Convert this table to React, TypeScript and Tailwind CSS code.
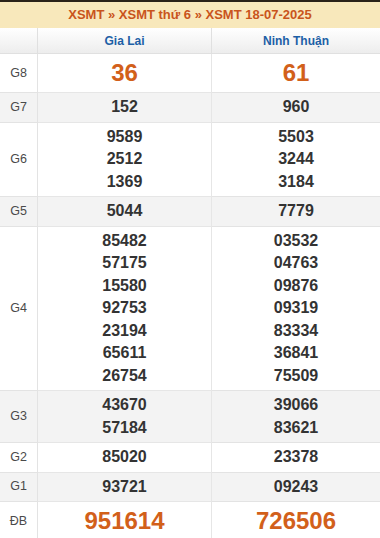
import React from "react";

type Row = { label: string; a: string[]; b: string[]; big?: boolean };

const rows: Row[] = [
  { label: "G8", a: ["36"], b: ["61"], big: true },
  { label: "G7", a: ["152"], b: ["960"] },
  { label: "G6", a: ["9589", "2512", "1369"], b: ["5503", "3244", "3184"] },
  { label: "G5", a: ["5044"], b: ["7779"] },
  {
    label: "G4",
    a: ["85482", "57175", "15580", "92753", "23194", "65611", "26754"],
    b: ["03532", "04763", "09876", "09319", "83334", "36841", "75509"],
  },
  { label: "G3", a: ["43670", "57184"], b: ["39066", "83621"] },
  { label: "G2", a: ["85020"], b: ["23378"] },
  { label: "G1", a: ["93721"], b: ["09243"] },
  { label: "ĐB", a: ["951614"], b: ["726506"], big: true },
];

function Cell({ nums, big, bg, last }: { nums: string[]; big?: boolean; bg: string; last?: boolean }) {
  return (
    <div
      className={`${bg} ${last ? "" : "border-r border-[#e6e6e6]"} border-b border-[#e3e3e3] flex flex-col items-center justify-center py-[3px]`}
    >
      {nums.map((n) => (
        <div
          key={n}
          className={
            big
              ? "text-[24px] leading-[32px] font-bold text-[#d2601a]"
              : "text-[16px] leading-[22.5px] font-bold text-[#333333]"
          }
        >
          {n}
        </div>
      ))}
    </div>
  );
}

export default function App() {
  return (
    <div
      className="w-[380px] h-[538px] overflow-hidden bg-white border-t-2 border-[#2a2218]"
      style={{ fontFamily: '"Liberation Sans", Arial, sans-serif' }}
    >
      <div className="h-[26px] bg-[#f8e8bb] flex items-center justify-center text-[13px] font-bold text-[#c9541c]">
        XSMT » XSMT thứ 6 » XSMT 18-07-2025
      </div>
      <div className="grid grid-cols-[38px_174px_1fr]">
        <div className="h-[26px] border-r border-b border-[#e0e0e0] bg-gradient-to-b from-white to-[#ededed]" />
        <div className="h-[26px] pt-[1px] border-r border-b border-[#e0e0e0] bg-gradient-to-b from-white to-[#ededed] flex items-center justify-center text-[12px] font-bold text-[#1d5fa6]">
          Gia Lai
        </div>
        <div className="h-[26px] pt-[1px] border-b border-[#e0e0e0] bg-gradient-to-b from-white to-[#ededed] flex items-center justify-center text-[12px] font-bold text-[#1d5fa6]">
          Ninh Thuận
        </div>
        {rows.map((r, i) => {
          const bg = i % 2 === 1 ? "bg-[#f3f3f3]" : "bg-white";
          return (
            <React.Fragment key={r.label}>
              <div
                className={`${bg} border-r border-b border-[#e3e3e3] flex items-center justify-center text-[12.5px] text-[#4a4a4a]`}
              >
                {r.label}
              </div>
              <Cell nums={r.a} big={r.big} bg={bg} />
              <Cell nums={r.b} big={r.big} bg={bg} last />
            </React.Fragment>
          );
        })}
      </div>
    </div>
  );
}
